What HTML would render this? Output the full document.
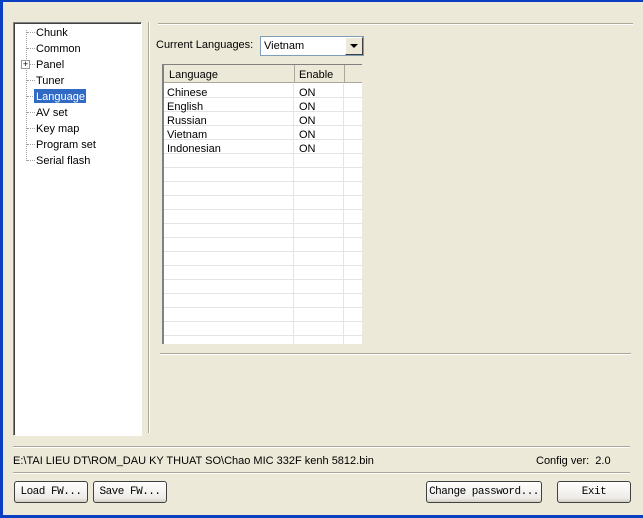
<!DOCTYPE html>
<html><head><meta charset="utf-8"><style>
*{margin:0;padding:0;box-sizing:border-box}
body{width:643px;height:518px;background:#ECE9D8;position:relative;overflow:hidden;font-family:"Liberation Sans",sans-serif;font-size:11px;color:#000}
.a{position:absolute}
.t{position:absolute;left:36px;line-height:14px;white-space:nowrap}
.hl{position:absolute;height:1px;background:#ACA899;border-bottom:1px solid #fff;box-sizing:content-box}
.btn{position:absolute;height:22px;border:1px solid #404040;border-radius:3px;background:linear-gradient(#fff,#ECEBE6 80%,#D6D0C5);font-family:"Liberation Mono",monospace;font-size:11px;text-align:center;line-height:21px;letter-spacing:-0.5px}
.dot{position:absolute;border-top:1px dotted #A0A0A0;width:8px}
</style></head><body>
<div class="a" style="left:0;top:0;width:643px;height:2px;background:#0A3FC2"></div>
<div class="a" style="left:0;top:0;width:3px;height:518px;background:#0A3FC2"></div>
<div class="a" style="left:0;top:515px;width:643px;height:3px;background:#0A3FC2"></div>

<div class="a" style="left:13px;top:22px;width:129px;height:414px;background:#fff;border:1px solid #808080;border-right-color:#fff;border-bottom-color:#fff;box-shadow:inset 1px 1px 0 #404040"></div>
<div class="a" style="left:26px;top:30px;height:131px;border-left:1px dotted #A0A0A0"></div>
<div class="dot" style="left:27px;top:32px"></div>
<div class="dot" style="left:27px;top:48px"></div>
<div class="dot" style="left:27px;top:64px"></div>
<div class="dot" style="left:27px;top:80px"></div>
<div class="dot" style="left:27px;top:96px"></div>
<div class="dot" style="left:27px;top:112px"></div>
<div class="dot" style="left:27px;top:128px"></div>
<div class="dot" style="left:27px;top:144px"></div>
<div class="dot" style="left:27px;top:160px"></div>
<div class="a" style="left:21px;top:60px;width:9px;height:9px;border:1px solid #919B9C;background:#fff;font-size:9px;line-height:7px;text-align:center">+</div>
<div class="t" style="top:26px">Chunk</div>
<div class="t" style="top:42px">Common</div>
<div class="t" style="top:58px">Panel</div>
<div class="t" style="top:74px">Tuner</div>
<div class="a" style="left:34px;top:89px;width:52px;height:14px;background:#316AC5"></div>
<div class="t" style="top:90px;color:#fff">Language</div>
<div class="t" style="top:106px">AV set</div>
<div class="t" style="top:122px">Key map</div>
<div class="t" style="top:138px">Program set</div>
<div class="t" style="top:154px">Serial flash</div>

<div class="a" style="left:148px;top:22px;width:1px;height:411px;background:#ACA899;border-right:1px solid #fff;box-sizing:content-box"></div>
<div class="hl" style="left:158px;top:23px;width:475px"></div>

<div class="a" style="left:156px;top:39px;white-space:nowrap">Current Languages:</div>
<div class="a" style="left:260px;top:36px;width:104px;height:20px;background:#fff;border:1px solid #7F9DB9"></div>
<div class="a" style="left:264px;top:40px">Vietnam</div>
<div class="a" style="left:345px;top:37px;width:18px;height:18px;background:#ECE9D8;border:1px solid;border-color:#fff #404040 #404040 #fff"></div>
<div class="a" style="left:350px;top:44px;width:0;height:0;border-left:4px solid transparent;border-right:4px solid transparent;border-top:4px solid #000"></div>

<div class="a" style="left:162px;top:64px;width:200px;height:280px;background:#fff;border-left:2px solid #808080;border-top:1px solid #808080;overflow:hidden">
 <div class="a" style="left:0;top:0;width:200px;height:18px;background:#ECE9D8;border-bottom:1px solid #ACA899"></div>
 <div class="a" style="left:0;top:0;width:131px;height:18px;border-right:1px solid #ACA899"></div>
 <div class="a" style="left:130px;top:0;width:51px;height:18px;border-right:1px solid #ACA899"></div>
 <div class="a" style="left:5px;top:4px">Language</div>
 <div class="a" style="left:135px;top:4px">Enable</div>
 <div class="a" style="left:0;top:19px;width:200px;height:260px;background:repeating-linear-gradient(#fff 0 13px,#E4E4E4 13px 14px)"></div>
 <div class="a" style="left:129px;top:19px;width:1px;height:260px;background:#E4E4E4"></div>
 <div class="a" style="left:179px;top:19px;width:1px;height:260px;background:#E4E4E4"></div>
 <div class="a" style="left:3px;top:21px;line-height:14px">Chinese<br>English<br>Russian<br>Vietnam<br>Indonesian</div>
 <div class="a" style="left:135px;top:21px;line-height:14px">ON<br>ON<br>ON<br>ON<br>ON</div>
</div>

<div class="hl" style="left:160px;top:353px;width:471px"></div>
<div class="hl" style="left:13px;top:446px;width:617px"></div>
<div class="a" style="left:13px;top:455px;white-space:nowrap">E:\TAI LIEU DT\ROM_DAU KY THUAT SO\Chao MIC 332F kenh 5812.bin</div>
<div class="a" style="left:536px;top:455px;white-space:nowrap">Config ver:&nbsp; 2.0</div>
<div class="hl" style="left:13px;top:472px;width:617px"></div>

<div class="btn" style="left:14px;top:481px;width:74px">Load FW...</div>
<div class="btn" style="left:93px;top:481px;width:74px">Save FW...</div>
<div class="btn" style="left:426px;top:481px;width:116px">Change password...</div>
<div class="btn" style="left:557px;top:481px;width:74px">Exit</div>
</body></html>
